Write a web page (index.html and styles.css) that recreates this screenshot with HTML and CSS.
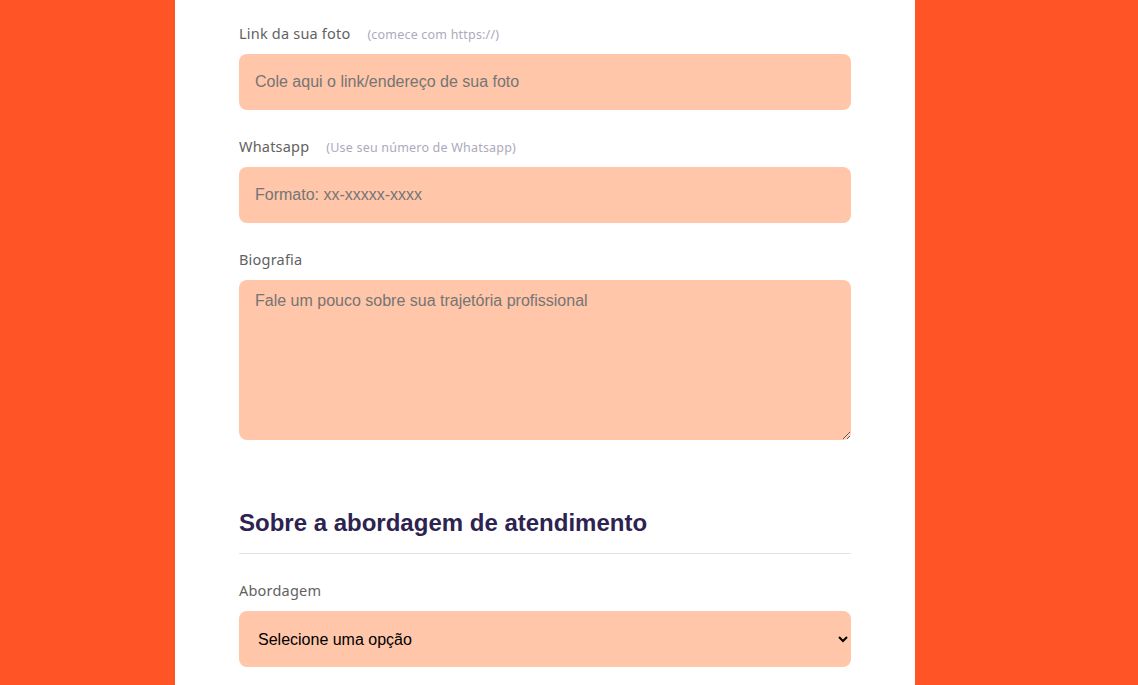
FILE: index.html
```html
<!DOCTYPE html>
<html lang="pt-BR">
<head>
<meta charset="utf-8">
<title>Formulário</title>
<link rel="stylesheet" href="styles.css">
</head>
<body>
<div class="page">
  <main class="panel">
    <form class="form">
      <div class="field">
        <label class="label" for="foto">Link da sua foto <span class="hint">(comece com https://)</span></label>
        <input class="input" id="foto" type="text" placeholder="Cole aqui o link/endereço de sua foto">
      </div>
      <div class="field">
        <label class="label" for="whats">Whatsapp <span class="hint">(Use seu número de Whatsapp)</span></label>
        <input class="input" id="whats" type="text" placeholder="Formato: xx-xxxxx-xxxx">
      </div>
      <div class="field field-bio">
        <label class="label" for="bio">Biografia</label>
        <textarea class="input textarea" id="bio" placeholder="Fale um pouco sobre sua trajetória profissional"></textarea>
      </div>
      <h2 class="section-title">Sobre a abordagem de atendimento</h2>
      <div class="field">
        <label class="label" for="abord">Abordagem</label>
        <select class="input select" id="abord">
          <option>Selecione uma opção</option>
        </select>
      </div>
    </form>
  </main>
</div>
</body>
</html>
```
FILE: styles.css
```css
* { box-sizing: border-box; }
html, body { margin: 0; padding: 0; }
body {
  background: #ff5526;
  font-family: "Liberation Sans", Arial, sans-serif;
  height: 685px;
  overflow: hidden;
}
.page {
  display: flex;
  padding-left: 175px;
}
.panel {
  width: 740px;
  background: #ffffff;
  min-height: 685px;
  padding: 24px 64px 40px;
}
.form { display: flex; flex-direction: column; }
.field { display: flex; flex-direction: column; margin-bottom: 27px; }
.field-bio { margin-bottom: 68px; }
.label {
  display: flex;
  align-items: baseline;
  height: 18px;
  font-family: "Noto Sans", "Open Sans", sans-serif;
  font-size: 14.5px;
  line-height: 18px;
  color: #626262;
  margin-bottom: 12px;
  letter-spacing: 0.2px;
  white-space: pre;
}
.hint {
  font-size: 12.5px;
  color: #ada9bd;
  margin-left: 13px;
  letter-spacing: 0.2px;
}
.input {
  width: 100%;
  height: 56px;
  border: none;
  border-radius: 8px;
  background: #ffc6a9;
  padding: 0 16px;
  font-family: "Liberation Sans", Arial, sans-serif;
  font-size: 16px;
  color: #222;
  outline: none;
}
.input::placeholder { color: #757575; }
.textarea {
  height: 160px;
  padding: 11px 16px;
  line-height: 20px;
  resize: vertical;
}
.select {
  padding: 0 15px;
  color: #000;
}
.section-title {
  margin: 0 0 27px;
  padding-bottom: 15px;
  border-bottom: 1px solid #e3e2ea;
  font-family: "Liberation Sans", Arial, sans-serif;
  font-size: 24px;
  line-height: 30px;
  font-weight: 700;
  color: #2d2350;
}
```
